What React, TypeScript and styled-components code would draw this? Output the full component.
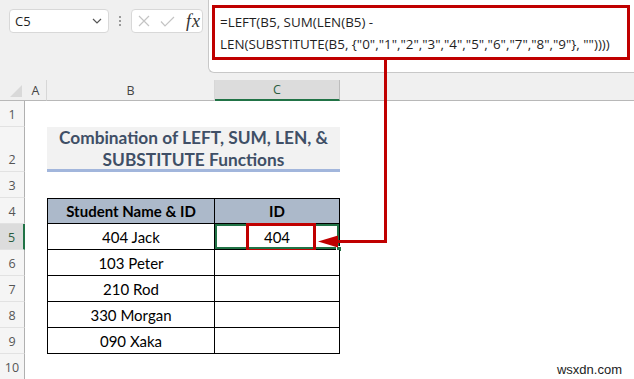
import React from 'react'
import styled, {createGlobalStyle} from 'styled-components'

// -------------------------------------------------------------
// Data.
// -------------------------------------------------------------

const rowHeights = [26, 45, 26, 26, 26, 26, 26, 26, 26, 26]

const students = ['404 Jack', '103 Peter', '210 Rod', '330 Morgan', '090 Xaka']

const FORMULA_LINE_1 = '=LEFT(B5, SUM(LEN(B5) -'
const FORMULA_LINE_2 =
  'LEN(SUBSTITUTE(B5, {"0","1","2","3","4","5","6","7","8","9"}, ""))))'

const RED = '#c00000'
const GREEN = '#217346'

// -------------------------------------------------------------
// Global.
// -------------------------------------------------------------

const GlobalStyle = createGlobalStyle`
  html, body {
    margin: 0;
    padding: 0;
    background: #fff;
  }

  body {
    width: 634px;
    height: 379px;
    overflow: hidden;
    font-family: Lato, "Liberation Sans", sans-serif;
  }

  * {
    box-sizing: border-box;
  }
`

const Window = styled.div`
  position: relative;
  width: 634px;
  height: 379px;
  overflow: hidden;
  background: #fff;
`

// -------------------------------------------------------------
// Toolbar.
// -------------------------------------------------------------

const Toolbar = styled.header`
  display: flex;
  align-items: flex-start;
  height: 80px;
  background: #f0f0f0;
`

const Controls = styled.div`
  display: flex;
  align-items: center;
  width: 208px;
  padding: 9px 0 0 9px;
`

const NameBox = styled.div`
  display: flex;
  align-items: center;
  justify-content: space-between;
  width: 100px;
  height: 24px;
  padding: 0 6px 0 5px;

  background: #fff;
  border: 1px solid #d8d8d8;
  border-radius: 4px;

  color: #1f1f1f;
  font-family: 'Open Sans', sans-serif;
  font-size: 13px;
`

const Grip = styled.div`
  display: flex;
  flex-direction: column;
  align-items: center;
  gap: 2px;
  width: 22px;

  span {
    width: 2px;
    height: 2px;
    background: #9a9a9a;
  }
`

const FxBox = styled.div`
  display: flex;
  align-items: center;
  width: 72px;
  height: 24px;
  padding-left: 6px;
  gap: 10px;

  background: #fff;
  border: 1px solid #d8d8d8;
  border-radius: 4px;
`

const Fx = styled.span`
  margin-left: 1px;
  color: #333;
  font-family: 'Liberation Serif', serif;
  font-style: italic;
  font-size: 18px;
  letter-spacing: 1px;
`

const FormulaBox = styled.div`
  flex: 1;
  height: 73px;
  padding: 5px 4px 0 3px;

  background: #fff;
  border-left: 1px solid #c8c8c8;
  border-bottom: 1px solid #c8c8c8;
  border-bottom-left-radius: 6px;
`

const FormulaText = styled.div`
  height: 55px;
  padding: 3px 0 0 5px;

  border: 3px solid ${RED};

  color: #1f1f1f;
  font-family: 'Open Sans', sans-serif;
  font-size: 13.4px;
  line-height: 22px;
  white-space: nowrap;
`

// -------------------------------------------------------------
// Sheet.
// -------------------------------------------------------------

const Sheet = styled.div`
  display: grid;
  grid-template-columns: 25px 22px 168px 125px 1fr;
  grid-template-rows: 21px ${rowHeights.map(h => `${h}px`).join(' ')};
`

const HeaderBand = styled.div`
  grid-row: 1;
  grid-column: 1 / -1;
  background: #f0f0f0;
`

const Corner = styled.div`
  grid-row: 1;
  grid-column: 1;
  display: flex;
  align-items: flex-end;
  justify-content: flex-end;
  padding: 0 3px 3px 0;

  border-bottom: 1px solid #b8b8b8;

  svg {
    display: block;
  }
`

const ColHead = styled.div<{$col: number; $active?: boolean}>`
  grid-row: 1;
  grid-column: ${p => p.$col};
  display: flex;
  align-items: center;
  justify-content: center;

  background: ${p => (p.$active ? '#dcdcdc' : 'transparent')};
  border-right: 1px solid ${p => (p.$active ? '#bdbdbd' : '#d7d7d7')};
  border-bottom: ${p => (p.$active ? `2px solid ${GREEN}` : '1px solid #b8b8b8')};

  color: ${p => (p.$active ? '#2a5c3f' : '#444')};
  font-family: 'Open Sans', sans-serif;
  font-size: 12.5px;
`

const HeadFill = styled.div`
  grid-row: 1;
  grid-column: 5;
  border-bottom: 1px solid #b8b8b8;
`

const RowHead = styled.div<{$row: number; $active?: boolean}>`
  grid-row: ${p => p.$row};
  grid-column: 1;
  display: flex;
  align-items: flex-end;
  justify-content: center;
  padding-bottom: 3px;

  background: ${p => (p.$active ? '#dcdcdc' : '#f5f5f5')};
  border-right: ${p => (p.$active ? `2px solid ${GREEN}` : '1px solid #b0b0b0')};
  border-bottom: 1px solid #e2e2e2;

  color: ${p => (p.$active ? '#2a5c3f' : '#555')};
  font-family: 'Open Sans', sans-serif;
  font-size: 12.5px;
  line-height: 16px;
`

const Title = styled.div`
  grid-row: 3;
  grid-column: 3 / 5;
  display: flex;
  align-items: center;
  justify-content: center;
  padding-top: 1px;

  background: #f2f2f2;
  border-bottom: 3px solid #a2b6dc;

  color: #3f4f66;
  font-size: 17.3px;
  font-weight: 700;
  line-height: 22px;
  text-align: center;
`

const Cell = styled.div<{
  $row: number
  $col: number
  $head?: boolean
  $selected?: boolean
}>`
  position: relative;
  grid-row: ${p => p.$row};
  grid-column: ${p => p.$col};
  display: flex;
  align-items: center;
  justify-content: center;

  background: ${p => (p.$head ? '#acb9ca' : '#fff')};
  border-right: 1px solid #000;
  border-bottom: 1px solid #000;
  ${p => p.$col === 3 && 'border-left: 1px solid #000;'}
  ${p => p.$head && 'border-top: 1px solid #000;'}
  ${p => p.$selected && `box-shadow: inset 0 0 0 2px ${GREEN};`}

  color: #000;
  font-size: 15px;
  font-weight: ${p => (p.$head ? 700 : 400)};
`

const Highlight = styled.span`
  position: absolute;
  left: 31px;
  top: -1px;
  width: 70px;
  height: 29px;
  border: 3px solid ${RED};
`

const FillHandle = styled.span`
  position: absolute;
  right: -3px;
  bottom: -3px;
  width: 6px;
  height: 6px;
  background: ${GREEN};
  border: 1px solid #fff;
`

const Watermark = styled.div`
  grid-row: 11;
  grid-column: 5;
  align-self: end;
  justify-self: end;
  padding: 0 12px 3px 0;

  color: #222;
  font-family: 'Liberation Sans', Arial, sans-serif;
  font-size: 13px;
`

const Overlay = styled.svg`
  position: absolute;
  left: 0;
  top: 0;
  pointer-events: none;
`

// -------------------------------------------------------------
// Export.
// -------------------------------------------------------------

export default function App() {
  return (
    <Window>
      <GlobalStyle />

      <Toolbar>
        <Controls>
          <NameBox>
            <span>C5</span>
            <svg width="10" height="6" viewBox="0 0 10 6">
              <path d="M1 1 L5 5 L9 1" fill="none" stroke="#555" strokeWidth="1.2" />
            </svg>
          </NameBox>
          <Grip>
            <span />
            <span />
            <span />
          </Grip>
          <FxBox>
            <svg width="12" height="12" viewBox="0 0 12 12">
              <path d="M1 1 L11 11 M11 1 L1 11" stroke="#c4c4c4" strokeWidth="1.2" />
            </svg>
            <svg width="15" height="11" viewBox="0 0 15 11">
              <path d="M1 5.5 L5 10 L14 1" fill="none" stroke="#c4c4c4" strokeWidth="1.2" />
            </svg>
            <Fx>fx</Fx>
          </FxBox>
        </Controls>
        <FormulaBox>
          <FormulaText>
            <div>{FORMULA_LINE_1}</div>
            <div>{FORMULA_LINE_2}</div>
          </FormulaText>
        </FormulaBox>
      </Toolbar>

      <Sheet>
        <HeaderBand />
        <Corner>
          <svg width="12" height="12" viewBox="0 0 12 12">
            <path d="M12 0 L12 12 L0 12 Z" fill="#d9d9d9" />
          </svg>
        </Corner>
        <ColHead $col={2}>A</ColHead>
        <ColHead $col={3}>B</ColHead>
        <ColHead $col={4} $active>
          C
        </ColHead>
        <HeadFill />

        {rowHeights.map((_, i) => (
          <RowHead key={i} $row={i + 2} $active={i + 1 === 5}>
            {i + 1}
          </RowHead>
        ))}

        <Title>
          Combination of LEFT, SUM, LEN, &amp;
          <br />
          SUBSTITUTE Functions
        </Title>

        <Cell $row={5} $col={3} $head>
          Student Name &amp; ID
        </Cell>
        <Cell $row={5} $col={4} $head>
          ID
        </Cell>

        {students.map((name, i) => (
          <React.Fragment key={name}>
            <Cell $row={i + 6} $col={3}>
              {name}
            </Cell>
            <Cell $row={i + 6} $col={4} $selected={i === 0}>
              {i === 0 && (
                <>
                  404
                  <Highlight />
                  <FillHandle />
                </>
              )}
            </Cell>
          </React.Fragment>
        ))}

        <Watermark>wsxdn.com</Watermark>
      </Sheet>

      <Overlay width="634" height="379" viewBox="0 0 634 379">
        <path
          d="M385.5 60 L385.5 241.5 L336 241.5"
          fill="none"
          stroke={RED}
          strokeWidth="3"
        />
        <polygon points="318,241.5 338,235.5 338,247.5" fill={RED} />
      </Overlay>
    </Window>
  )
}
